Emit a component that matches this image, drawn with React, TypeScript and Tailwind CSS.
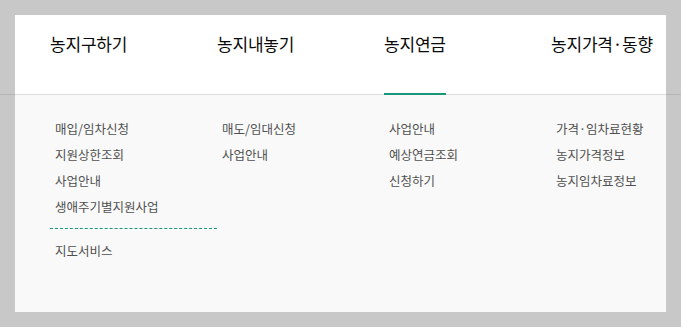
const menus = [
  {
    title: "농지구하기",
    items: ["매입/임차신청", "지원상한조회", "사업안내", "생애주기별지원사업"],
    extra: ["지도서비스"],
  },
  { title: "농지내놓기", items: ["매도/임대신청", "사업안내"] },
  { title: "농지연금", items: ["사업안내", "예상연금조회", "신청하기"], active: true },
  { title: "농지가격·동향", items: ["가격·임차료현황", "농지가격정보", "농지임차료정보"] },
];

const font = { fontFamily: '"Noto Sans CJK KR", "Noto Sans", sans-serif' };

export default function App() {
  return (
    <div className="h-[327px] w-[681px] overflow-hidden bg-[#c8c8c8] pt-[15px]" style={font}>
      <div className="border-b border-black/[0.1]">
        <div className="relative -mb-px mx-[15px] grid h-[80px] grid-cols-[167px_167px_167px_1fr] border-b border-[#dddddd] bg-white pl-[35px]">
          {menus.map((menu) => (
            <div key={menu.title}>
              <span
                className={`relative z-10 inline-block h-[80px] pt-[17px] text-[17px] leading-6 tracking-[-0.2px] text-[#0a0a0a] ${
                  menu.active ? "border-b-2 border-[#17977a]" : ""
                }`}
              >
                {menu.title}
              </span>
            </div>
          ))}
        </div>
      </div>
      <div className="mx-[15px] grid h-[217px] grid-cols-[167px_167px_167px_1fr] bg-[#f9f9f9] pl-[35px] pt-[21px]">
        {menus.map((menu) => (
          <div key={menu.title}>
            <ul>
              {menu.items.map((item) => (
                <li key={item} className="pl-[5px] text-[12.5px] leading-[26px] text-[#505050]">
                  {item}
                </li>
              ))}
            </ul>
            {menu.extra ? (
              <>
                <div className="mt-[8px] border-t border-dashed border-[#17977a]" />
                <ul className="mt-[9px]">
                  {menu.extra.map((item) => (
                    <li key={item} className="pl-[5px] text-[12.5px] leading-[26px] text-[#505050]">
                      {item}
                    </li>
                  ))}
                </ul>
              </>
            ) : null}
          </div>
        ))}
      </div>
    </div>
  );
}
